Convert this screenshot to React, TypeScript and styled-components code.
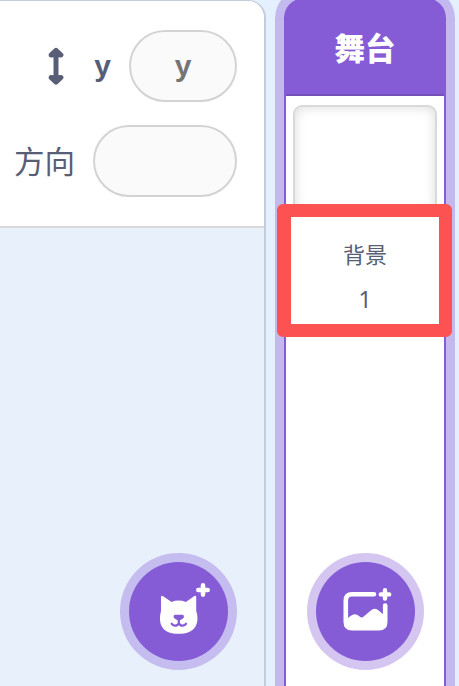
import React from "react";
import styled, { createGlobalStyle } from "styled-components";

const GlobalStyle = createGlobalStyle`
  *, *::before, *::after { box-sizing: border-box; }
  html, body { margin: 0; padding: 0; overflow: hidden; }
  body {
    background: #e5f0ff;
    font-family: "Liberation Sans", "Noto Sans CJK SC", sans-serif;
    color: #575e75;
  }
`;

const Workspace = styled.main`
  display: flex;
  gap: 18px;
  width: 459px;
  height: 686px;
  overflow: hidden;
`;

const SpritePane = styled.section`
  display: flex;
  flex-direction: column;
  width: 266px;
  height: 710px;
  flex: none;
  border-top: 1px solid #c3ccdc;
  border-right: 2px solid #c3ccdc;
  border-top-right-radius: 18px;
  background: #e8f0fc;
  overflow: hidden;
`;

const SpriteInfo = styled.div`
  display: flex;
  flex-direction: column;
  gap: 23px;
  height: 227px;
  padding: 29px 27px 0 0;
  background: #fff;
  border-bottom: 2px solid #d9d9d9;
`;

const InfoRow = styled.div`
  display: flex;
  justify-content: flex-end;
  align-items: center;
  height: 72px;
`;

const ArrowIcon = styled.svg`
  display: block;
  width: 16px;
  height: 38px;
  margin-right: 30px;
`;

const Label = styled.label<{ $bold?: boolean }>`
  font-size: ${(p) => (p.$bold ? 30 : 30.5)}px;
  line-height: 40px;
  font-weight: ${(p) => (p.$bold ? 700 : 400)};
  margin-right: 18px;
  padding-top: ${(p) => (p.$bold ? 0 : 2)}px;
`;

const Field = styled.input<{ $width: number }>`
  width: ${(p) => p.$width}px;
  height: 72px;
  padding: 0 0 1px;
  border: 2px solid #d3d3d3;
  border-radius: 36px;
  background: #fafafa;
  outline: none;
  text-align: center;
  font: 700 30px "Liberation Sans", sans-serif;
  &::placeholder { color: #757575; opacity: 1; }
`;

const FabSlot = styled.div<{ $right: number }>`
  display: flex;
  flex: 1;
  justify-content: flex-end;
  align-items: flex-end;
  padding: 0 ${(p) => p.$right}px 49px 0;
`;

const Fab = styled.button`
  width: 99px;
  height: 99px;
  padding: 0;
  border: 0;
  border-radius: 50%;
  background: #855cd6;
  box-shadow: 0 0 0 9px rgba(133, 92, 214, 0.35);
  svg { display: block; width: 99px; height: 99px; }
`;

const StagePane = styled.section`
  display: flex;
  flex-direction: column;
  width: 162px;
  height: 714px;
  flex: none;
  margin-top: -2px;
  border-radius: 20px 20px 0 0;
  border: 2px solid #855cd6;
  background: linear-gradient(#855cd6 80px, #fff 80px);
  box-shadow: 0 0 0 9px #c3b9ee;
`;

const StageHeader = styled.header`
  display: flex;
  align-items: center;
  justify-content: center;
  height: 96px;
  flex: none;
  padding-bottom: 1px;
  background: #855cd6;
  border-bottom: 2px solid #744fb9;
  border-radius: 18px 18px 0 0;
  color: #fff;
  font-size: 30.5px;
  font-weight: 900;
`;

const Thumbnail = styled.div`
  height: 108px;
  flex: none;
  margin: 9px 7px 0;
  border: 2px solid #d9d9d9;
  border-radius: 9px;
  box-shadow: inset 0 0 12px rgba(0, 0, 0, 0.15);
`;

const Backdrops = styled.div`
  position: relative;
  display: flex;
  flex-direction: column;
  align-items: center;
  width: 175px;
  height: 133px;
  flex: none;
  margin: -9px 0 0 -9px;
  padding-top: 23px;
  border: solid #fc5252;
  border-width: 13px 13px 13px 14px;
  border-radius: 6px;
  background: #fff;
  font-size: 22px;
`;

const BackdropLabel = styled.span`
  line-height: 32px;
`;

const BackdropCount = styled.span`
  margin-top: 12px;
  line-height: 30px;
  font-family: "Noto Sans", sans-serif;
  font-size: 23px;
`;

export default function App() {
  return (
    <>
      <GlobalStyle />
      <Workspace>
        <SpritePane>
          <SpriteInfo>
            <InfoRow>
              <ArrowIcon viewBox="0 0 16 38" fill="#575e75" stroke="#575e75" strokeLinecap="round" strokeLinejoin="round">
                <path d="M8 6V33" fill="none" strokeWidth="5" />
                <path d="M8 3.2L13 8L8 7.5L3 8ZM8 35.3L13 30.5L8 31L3 30.5Z" strokeWidth="4.8" />
              </ArrowIcon>
              <Label $bold>y</Label>
              <Field $width={108} placeholder="y" aria-label="y" />
            </InfoRow>
            <InfoRow>
              <Label>方向</Label>
              <Field $width={144} aria-label="方向" />
            </InfoRow>
          </SpriteInfo>
          <FabSlot $right={36}>
            <Fab aria-label="角色">
              <svg viewBox="0 0 99 99">
                <path
                  fill="#fff"
                  d="M32 35Q32.2 33 34.2 34.2L42.5 40Q49.6 37.2 56.9 40L65 34.2Q67 33 67.2 35V49C69 54 69 60 66.5 64.5C63 70 57 71.8 49.7 71.8C42 71.8 36 70 32.8 64.5C30.3 60 30.8 53 32 49Z"
                />
                <path fill="#855cd6" d="M46.3 52.7H53.2Q55.5 53.2 54.8 55.2Q53.3 58 49.8 58Q46.2 58 44.8 55.2Q44 53.2 46.3 52.7Z" />
                <path
                  fill="none"
                  stroke="#855cd6"
                  strokeWidth="2.3"
                  strokeLinecap="round"
                  strokeLinejoin="round"
                  d="M49.8 57V61.2Q48.5 64 45.5 63.6Q43.4 63.2 42.7 61.8M49.8 61.2Q51.2 64 54 63.6Q56.3 63.2 57 61.8"
                />
                <path fill="none" stroke="#fff" strokeWidth="4.6" strokeLinecap="round" d="M74 23.4V32.6M69.3 28H78.7" />
              </svg>
            </Fab>
          </FabSlot>
        </SpritePane>
        <StagePane>
          <StageHeader>舞台</StageHeader>
          <Thumbnail />
          <Backdrops>
            <BackdropLabel>背景</BackdropLabel>
            <BackdropCount>1</BackdropCount>
          </Backdrops>
          <FabSlot $right={29}>
            <Fab aria-label="背景">
              <svg viewBox="0 0 99 99">
                <path
                  fill="none"
                  stroke="#fff"
                  strokeWidth="4.6"
                  strokeLinecap="round"
                  d="M58 32.2H36Q29.8 32.2 29.8 38.4V60Q29.8 66.2 36 66.2H63Q69.2 66.2 69.2 60V43.5"
                />
                <path fill="#fff" d="M30 57.5L34.5 54Q39 50.4 43 54Q45.3 56.8 48 54.3L54.5 48.8Q58.7 45 62.6 48.4L69.2 54V61Q69 66.5 63 66.5H36Q30 66.5 30 60Z" />
                <path fill="none" stroke="#fff" strokeWidth="4.4" strokeLinecap="round" d="M69 28.2V36.6M64.8 32.4H73.2" />
              </svg>
            </Fab>
          </FabSlot>
        </StagePane>
      </Workspace>
    </>
  );
}
